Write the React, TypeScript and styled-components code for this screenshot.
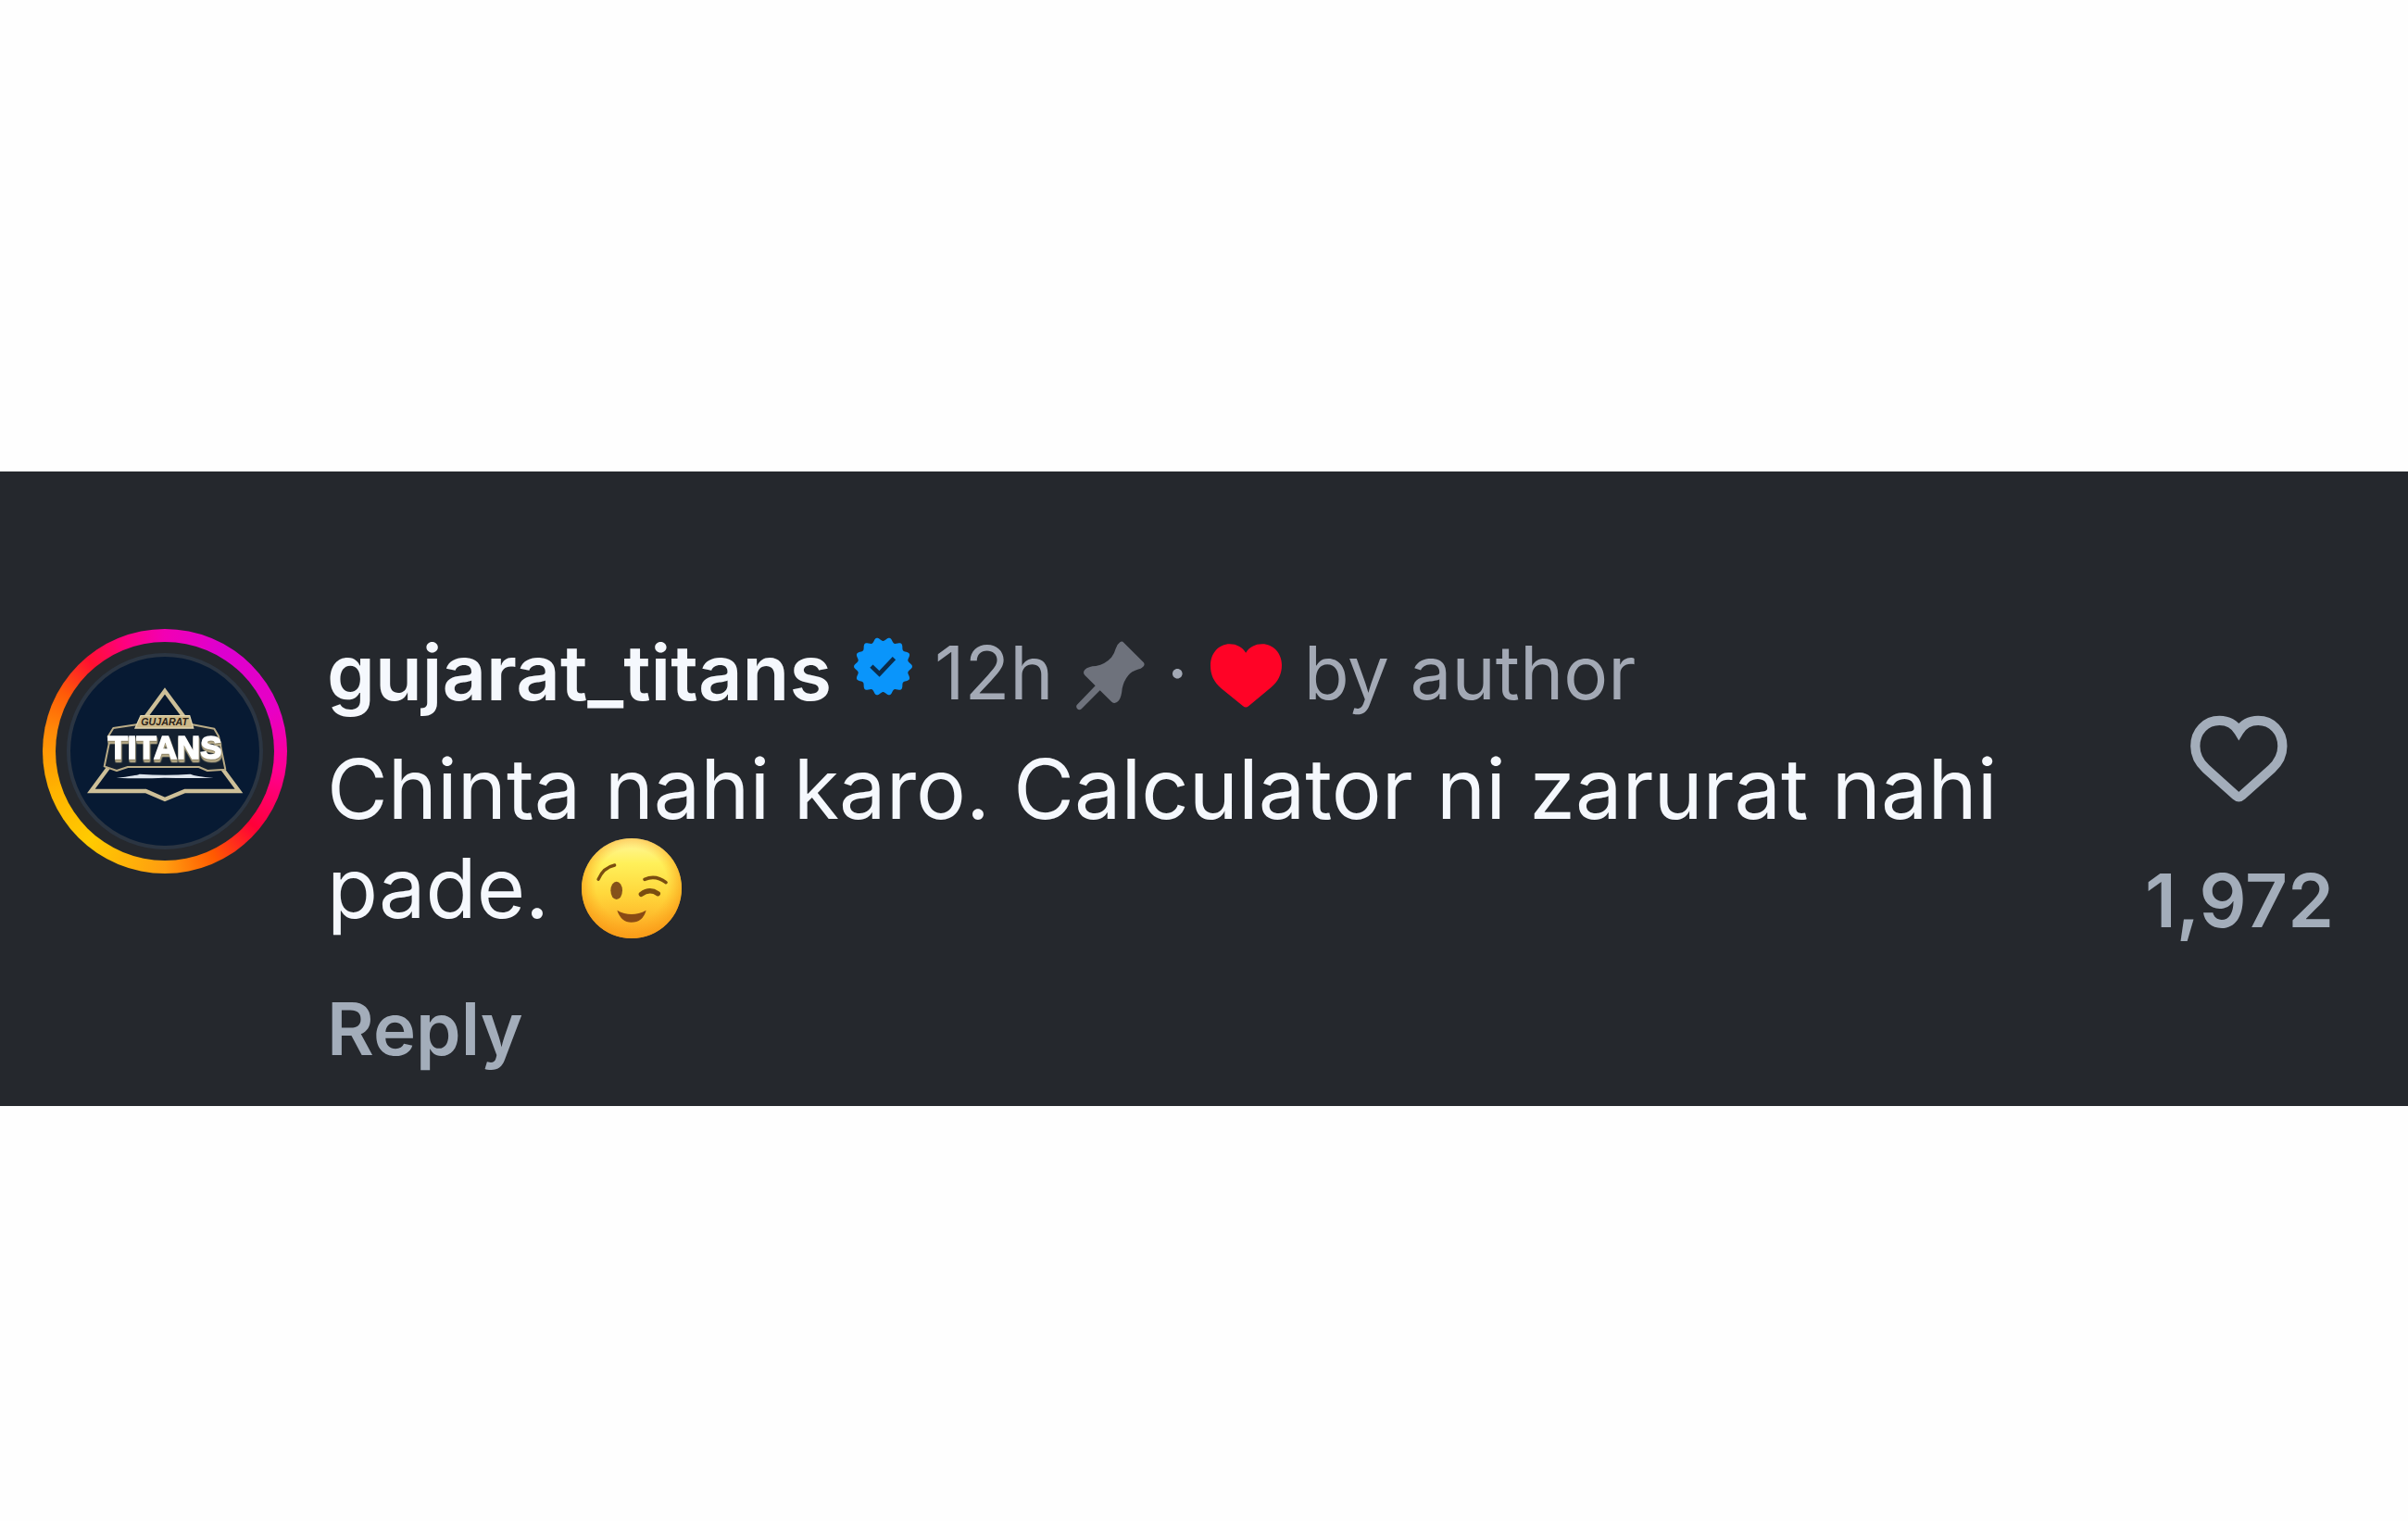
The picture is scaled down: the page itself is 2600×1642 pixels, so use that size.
import React from "react";
import styled, { createGlobalStyle } from "styled-components";

const ink = "#f5f8fd";
const muted = "#a3adba";
const panel = "#25282d";
const sans = `Inter, "Liberation Sans", sans-serif`;

const Global = createGlobalStyle`
  *, *::before, *::after { box-sizing: border-box; }
  body { margin: 0; background: #fefefe; font-family: ${sans}; }
`;

const Page = styled.main`
  min-height: 100vh;
  display: flex;
  flex-direction: column;
  justify-content: center;
  padding-top: 60px;
`;

const Comment = styled.article`
  display: flex;
  align-items: flex-start;
  gap: 43px;
  padding: 170px 80px 35px 46px;
  background: ${panel};
`;

const AvatarLink = styled.a`
  flex: none;
  display: block;
  width: 264px;
  height: 264px;
  padding: 14px;
  border-radius: 50%;
  background: conic-gradient(
    #f200b4 0deg, #dc00d0 30deg, #e800c4 70deg, #ff0090 100deg, #ff0038 130deg,
    #ff5a00 155deg, #ff9d10 180deg, #ffcb00 220deg, #ffb400 250deg, #ff8a08 280deg,
    #ff5a08 300deg, #ff1030 320deg, #ff0080 340deg, #f200b4 360deg
  );
`;

const Avatar = styled.span`
  display: block;
  height: 100%;
  padding: 11px;
  border-radius: 50%;
  background: ${panel};

  svg { display: block; width: 100%; height: 100%; }
`;

const Body = styled.div`
  flex: 1;
  min-width: 0;
`;

const Meta = styled.header`
  display: flex;
  align-items: center;
  gap: 24px;
  font-size: 80px;
  line-height: 94px;
  color: #a3a9b5;
  white-space: nowrap;
`;

const Username = styled.a`
  color: ${ink};
  font-size: 83px;
  font-weight: 600;
  text-decoration: none;
`;

const BadgeIcon = styled.svg`
  flex: none;
  width: 63px;
  height: 63px;
  margin-bottom: 12px;
`;

const MetaIcon = styled.svg<{ $width: number }>`
  flex: none;
  width: ${(p) => p.$width}px;
  margin-top: 8px;
`;

const Message = styled.p`
  margin: 25px 0 0;
  color: ${ink};
  font-size: 90px;
  line-height: 107px;
`;

const Emoji = styled.svg`
  width: 108px;
  height: 108px;
  margin-left: 10px;
  vertical-align: -22px;
`;

const TextButton = styled.button`
  padding: 0;
  border: 0;
  background: none;
  color: ${muted};
  font-family: ${sans};
  font-weight: 600;
  line-height: 96px;
  cursor: pointer;
`;

const ReplyButton = styled(TextButton)`
  display: block;
  margin-top: 50px;
  font-size: 78px;
`;

const LikeButton = styled(TextButton)`
  flex: none;
  display: flex;
  flex-direction: column;
  align-items: center;
  gap: 58px;
  margin-top: 93px;
  font-size: 80px;

  svg { display: block; width: 105px; height: 94px; }
`;

const LogoText = styled.text`
  font-family: "Liberation Sans", sans-serif;
  font-weight: 700;
  text-anchor: middle;
`;

const LogoWordmark = styled(LogoText)`
  font-size: 104px;
  fill: #fff;
  stroke: #fff;
  stroke-width: 5px;
  filter: drop-shadow(1px 4px 0 #8d8468) drop-shadow(1px 6px 0 #c4b68f);
`;

const TeamLogo = () => (
  <svg viewBox="121 128 642 642" role="img" aria-label="Gujarat Titans">
    <circle cx="442" cy="449" r="312" fill="#071a33" stroke="#2b3542" strokeWidth="12" />
    <path
      d="M442 254 682 578H507L442 605 380 578H203Z"
      fill="#06162d"
      stroke="#cdbf98"
      strokeWidth="13"
    />
    <path
      d="M355 362 275 374 258 402 262 420 246 498 286 512 322 500H552L580 512 638 508 616 400 602 376 528 362Z"
      fill="#14202f"
      stroke="#b9ab86"
      strokeWidth="6"
      strokeLinejoin="round"
    />
    <path d="M364 334H522L534 374H346Z" fill="#cdb98a" stroke="#e2d5ae" strokeWidth="4" />
    <LogoText x="441" y="366" fontSize="32" fontStyle="italic" fill="#2b2115">GUJARAT</LogoText>
    <LogoWordmark x="442" y="474">TITANS</LogoWordmark>
    <path d="M285 535Q350 528 360 523 445 529 525 523 540 530 600 535 520 537 440 535 360 539 285 535Z" fill="#dfe6ee" />
  </svg>
);

const lobes = 14;
const sealPath = `M${Array.from({ length: 168 }, (_, i) => {
  const a = (i / 168) * Math.PI * 2;
  const r = 89 - 6 * Math.cos(lobes * a);
  return `${(132 + r * Math.sin(a)).toFixed(1)} ${(133 - r * Math.cos(a)).toFixed(1)}`;
}).join("L")}Z`;

const Verified = () => (
  <BadgeIcon viewBox="37 38 190 190" role="img" aria-label="Verified">
    <path d={sealPath} fill="#0a95fb" />
    <path d="M94 132 120 157 168 106" fill="none" stroke="#0b2c4b" strokeWidth="14" />
  </BadgeIcon>
);

const Pin = () => (
  <MetaIcon $width={74} viewBox="36 41 222 224" role="img" aria-label="Pinned">
    <path
      d="M178 45Q184 40 190 46L254 110Q260 117 253 124 246 131 235 133 215 139 205 152 190 170 185 195 183 222 174 234 162 248 151 238L113 201 54 260Q46 267 39 260 33 252 41 245L98 186 64 152Q56 143 64 134 75 123 100 122 130 116 150 94 160 82 164 66 168 52 178 45Z"
      fill="#6e727c"
    />
  </MetaIcon>
);

const LikedHeart = () => (
  <MetaIcon $width={77} viewBox="50 50 230 206" role="img" aria-label="Liked">
    <path
      d="M155 251 85 194C60 172 50 150 50 120 50 80 77 51 112 51 135 51 152 61 164 79 176 61 193 51 217 51 252 51 280 80 280 119 280 150 267 173 244 192L173 251Q164 259 155 251Z"
      fill="#ff0326"
    />
  </MetaIcon>
);

const Heart = () => (
  <svg viewBox="254 96 317 282" aria-hidden="true">
    <path
      d="M402 357 305 270C279 246 270 224 270 196 270 148 304 113 349 113 377 113 398 125 412 148 426 125 447 113 475 113 520 113 554 148 554 196 554 224 545 246 519 270L422 357Q412 366 402 357Z"
      fill="none"
      stroke="currentColor"
      strokeWidth="31"
    />
  </svg>
);

const Wink = () => (
  <Emoji viewBox="82 46 324 324" role="img" aria-label="Winking face">
    <defs>
      <linearGradient id="face" x1="0" y1="0" x2="0" y2="1">
        <stop offset="0" stopColor="#fff6a0" />
        <stop offset="0.25" stopColor="#fff05a" />
        <stop offset="0.55" stopColor="#ffd83c" />
        <stop offset="1" stopColor="#fda31f" />
      </linearGradient>
      <radialGradient id="rim" cx="0.5" cy="0.46" r="0.55">
        <stop offset="0.65" stopColor="#ffa51e" stopOpacity="0" />
        <stop offset="1" stopColor="#f79a16" stopOpacity="0.85" />
      </radialGradient>
    </defs>
    <circle cx="244" cy="208" r="162" fill="url(#face)" />
    <circle cx="244" cy="208" r="162" fill="url(#rim)" />
    <g fill="none" stroke="#7a4d10" strokeLinecap="round">
      <path d="M136 179Q152 141 189 133" strokeWidth="10" />
      <path d="M286 179Q322 163 355 189" strokeWidth="11" />
      <path d="M275 227Q302 207 329 225" strokeWidth="16" />
    </g>
    <ellipse cx="195" cy="215" rx="19" ry="29" fill="#85521a" />
    <path d="M197 279Q243 305 291 279 280 318 243 318 210 318 197 279Z" fill="#8a4a14" />
  </Emoji>
);

export default function App() {
  return (
    <>
      <Global />
      <Page>
        <Comment>
          <AvatarLink href="#profile">
            <Avatar>
              <TeamLogo />
            </Avatar>
          </AvatarLink>
          <Body>
            <Meta>
              <Username href="#profile">gujarat_titans</Username>
              <Verified />
              <time>12h</time>
              <Pin />
              <span>·</span>
              <LikedHeart />
              <span>by author</span>
            </Meta>
            <Message>
              Chinta nahi karo. Calculator ni zarurat nahi pade. <Wink />
            </Message>
            <ReplyButton type="button">Reply</ReplyButton>
          </Body>
          <LikeButton type="button">
            <Heart />
            <span>1,972</span>
          </LikeButton>
        </Comment>
      </Page>
    </>
  );
}
